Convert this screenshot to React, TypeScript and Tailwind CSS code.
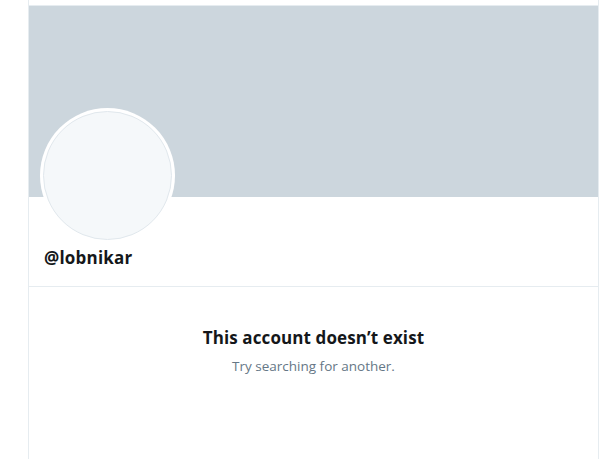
import React from "react";

export default function App() {
  return (
    <div className="w-[610px] h-[459px] bg-white overflow-hidden" style={{ fontFamily: '"Open Sans", "Noto Sans", sans-serif' }}>
      <div className="ml-[28px] w-[571px] h-[459px] border-l border-r border-[#e6ecf0] flex flex-col">
        <div className="h-[6px] border-b border-[#e6ecf0]" />
        <div className="h-[191px] bg-[#ccd6dd]" />
        <div className="relative h-[90px] border-b border-[#e6ecf0] px-[15px]">
          <div className="absolute left-[11px] top-[-89px] w-[135px] h-[135px] rounded-full bg-white p-[3px]">
            <div className="w-full h-full rounded-full bg-[#f5f8fa] border border-[#e1e8ed]" />
          </div>
          <div className="pt-[50px] text-[17px] font-bold text-[#14171a] leading-[22px] tracking-[0.2px]">@lobnikar</div>
        </div>
        <div className="flex flex-col items-center pt-[40px]">
          <div className="text-[17px] font-bold text-[#14171a] leading-[22px] tracking-[0.1px]">This account doesn’t exist</div>
          <div className="mt-[8px] text-[13.5px] text-[#657786] leading-[18px]">Try searching for another.</div>
        </div>
      </div>
    </div>
  );
}
